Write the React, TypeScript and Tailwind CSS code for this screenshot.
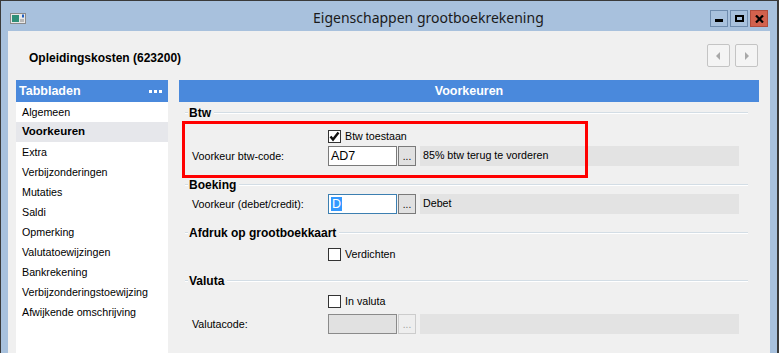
import React from "react";

const tabs = [
	"Algemeen",
	"Voorkeuren",
	"Extra",
	"Verbijzonderingen",
	"Mutaties",
	"Saldi",
	"Opmerking",
	"Valutatoewijzingen",
	"Bankrekening",
	"Verbijzonderingstoewijzing",
	"Afwijkende omschrijving",
];

const SectionHeader = ({ title, className = "" }: { title: string; className?: string }) => (
	<div className={`flex h-[15px] items-center pl-[6px] pr-[11px] ${className}`}>
		<div className="h-[2px] w-[3px] border-t border-[#d3dde5] bg-white" />
		<span className="ml-px mr-[3px] text-[12px] font-bold leading-none text-black">{title}</span>
		<div className="h-[2px] flex-1 border-t border-[#d3dde5] bg-white" />
	</div>
);

const CheckRow = ({ label, checked, className = "" }: { label: string; checked?: boolean; className?: string }) => (
	<div className={`flex h-[20px] items-center pl-[149px] ${className}`}>
		<div className="flex h-[13px] w-[13px] items-center justify-center border border-[#333333] bg-white">
			{checked && (
				<svg width="11" height="11" viewBox="0 0 11 11">
					<path d="M1.5 5.5 L4 8.5 L9.5 1.5" stroke="#111" strokeWidth="2.4" fill="none" />
				</svg>
			)}
		</div>
		<span className="ml-[4px] text-[10.7px] text-black">{label}</span>
	</div>
);

const FieldRow = ({
	label,
	value,
	description,
	focused,
	disabled,
	className = "",
}: {
	label: string;
	value?: string;
	description?: string;
	focused?: boolean;
	disabled?: boolean;
	className?: string;
}) => (
	<div className={`flex h-[20px] items-center pl-[13px] ${className}`}>
		<span className="w-[136px] text-[10.7px] text-black">{label}</span>
		<div
			className={`flex h-[20px] w-[69px] items-center border px-[2px] ${
				focused ? "border-[#3c7fb1] bg-white" : disabled ? "border-[#8a8a8a] bg-[#e1e1e1]" : "border-[#7a7a7a] bg-white"
			}`}
		>
			{focused ? (
				<span className="bg-[#3399ff] px-px text-[12.5px] leading-[14px] text-white">{value}</span>
			) : (
				<span className="text-[12.5px] text-black">{value}</span>
			)}
		</div>
		<div
			className={`ml-px flex h-[20px] w-[18px] items-end justify-center border pb-[3px] text-[10px] leading-none ${
				disabled ? "border-[#cccccc] bg-[#eeeeee] text-[#a0a0a0]" : "border-[#7a7a7a] bg-[#e1e1e1] text-black"
			}`}
		>
			...
		</div>
		<div className="ml-[4px] mr-[20px] flex h-[20px] flex-1 items-center bg-[#e3e3e3] pl-[3px] pb-[2px] text-[10.7px] text-black">
			{description}
		</div>
	</div>
);

export default function App() {
	return (
		<div className="flex h-[353px] w-[779px] flex-col overflow-hidden border-l border-t border-r-2 border-[#3a3a3a] bg-[#a8c1dd] font-['Liberation_Sans',Arial,sans-serif]">
			{/* title bar */}
			<div className="relative flex h-[30px] shrink-0 items-center">
				<svg className="absolute left-[9px] top-[12px]" width="16" height="11" viewBox="0 0 16 11">
					<rect x="0.5" y="0.5" width="15" height="10" fill="#e8e8e8" stroke="#8a8a8a" />
					<rect x="2" y="2" width="7" height="7" fill="#2f8f78" />
					<rect x="10" y="6" width="4" height="3" fill="#b8b8b8" />
					<rect x="12" y="1.5" width="2" height="3" fill="#1f5fc0" />
				</svg>
				<div className="pl-[312px] pt-[3px] font-['Noto_Sans',sans-serif] text-[14px] text-[#1a1a1a]">
					Eigenschappen grootboekrekening
				</div>
				<div className="absolute right-[9px] top-[9px] flex gap-[2px]">
					<div className="flex h-[17px] w-[18px] items-center justify-center border border-[#6f8cae] bg-[#a8c1dd]">
						<div className="mt-[3px] h-[3px] w-[8px] bg-black" />
					</div>
					<div className="flex h-[17px] w-[18px] items-center justify-center border border-[#6f8cae] bg-[#a8c1dd]">
						<div className="h-[7px] w-[9px] border-2 border-black" />
					</div>
					<div className="flex h-[17px] w-[18px] items-center justify-center border border-[#b04a3a] bg-[#d2614d]">
						<svg width="9" height="8" viewBox="0 0 9 8">
							<path d="M1 0.5 L8 7.5 M8 0.5 L1 7.5" stroke="#000" strokeWidth="2.2" />
						</svg>
					</div>
				</div>
			</div>

			{/* body */}
			<div className="ml-[7px] mr-[7px] flex flex-1 flex-col bg-[#f0f0f0]">
				<div className="flex h-[49px] shrink-0 items-start justify-between pl-[21px] pr-[12px]">
					<span className="pt-[18px] text-[12px] font-bold text-black">Opleidingskosten (623200)</span>
					<div className="mt-[13px] flex gap-[5px]">
						<div className="flex h-[23px] w-[23px] items-center justify-center rounded-[2px] border border-[#c4c4c4] bg-[#f4f4f4]">
							<svg width="5" height="8" viewBox="0 0 5 8">
								<path d="M4 0 L0 4 L4 8 Z" fill="#a8a8a8" />
							</svg>
						</div>
						<div className="flex h-[23px] w-[23px] items-center justify-center rounded-[2px] border border-[#c4c4c4] bg-[#f4f4f4]">
							<svg width="5" height="8" viewBox="0 0 5 8">
								<path d="M1 0 L5 4 L1 8 Z" fill="#a8a8a8" />
							</svg>
						</div>
					</div>
				</div>

				<div className="flex flex-1 pl-[8px] pr-[11px]">
					{/* sidebar */}
					<div className="flex w-[152px] flex-col">
						<div className="flex h-[22px] items-center justify-between bg-[#4a89dc] pl-[3px] pr-[6px] text-white">
							<span className="text-[12.5px] font-bold">Tabbladen</span>
							<div className="flex gap-[2px]">
								<div className="h-[3px] w-[3px] bg-white" />
								<div className="h-[3px] w-[3px] bg-white" />
								<div className="h-[3px] w-[3px] bg-white" />
							</div>
						</div>
						<div className="flex-1 bg-white">
							{tabs.map((t) => (
								<div
									key={t}
									className={`flex h-[20px] items-center pl-[6px] text-[10.7px] text-black ${
										t === "Voorkeuren" ? "bg-[#e6e7eb] text-[11.5px] font-bold" : ""
									}`}
								>
									{t}
								</div>
							))}
						</div>
					</div>

					{/* main */}
					<div className="relative ml-[11px] flex flex-1 flex-col">
						<div className="flex h-[22px] items-center justify-center bg-[#4a89dc] text-[12.5px] font-bold text-white">
							Voorkeuren
						</div>
						<div className="flex flex-col pt-[3px]">
							<SectionHeader title="Btw" />
							<CheckRow label="Btw toestaan" checked className="mt-[6px]" />
							<FieldRow label="Voorkeur btw-code:" value="AD7" description="85% btw terug te vorderen" className="mt-0" />
							<SectionHeader title="Boeking" className="mt-[11px]" />
							<FieldRow label="Voorkeur (debet/credit):" value="D" description="Debet" focused className="mt-[2px]" />
							<SectionHeader title="Afdruk op grootboekkaart" className="mt-[11px]" />
							<CheckRow label="Verdichten" className="mt-[4px]" />
							<SectionHeader title="Valuta" className="mt-[9px]" />
							<CheckRow label="In valuta" className="mt-[3px]" />
							<FieldRow label="Valutacode:" disabled className="mt-[3px]" />
						</div>
						<div className="absolute left-[3px] top-[41px] h-[57px] w-[406px] border-[3px] border-[#ff0000]" />
					</div>
				</div>
			</div>
		</div>
	);
}
